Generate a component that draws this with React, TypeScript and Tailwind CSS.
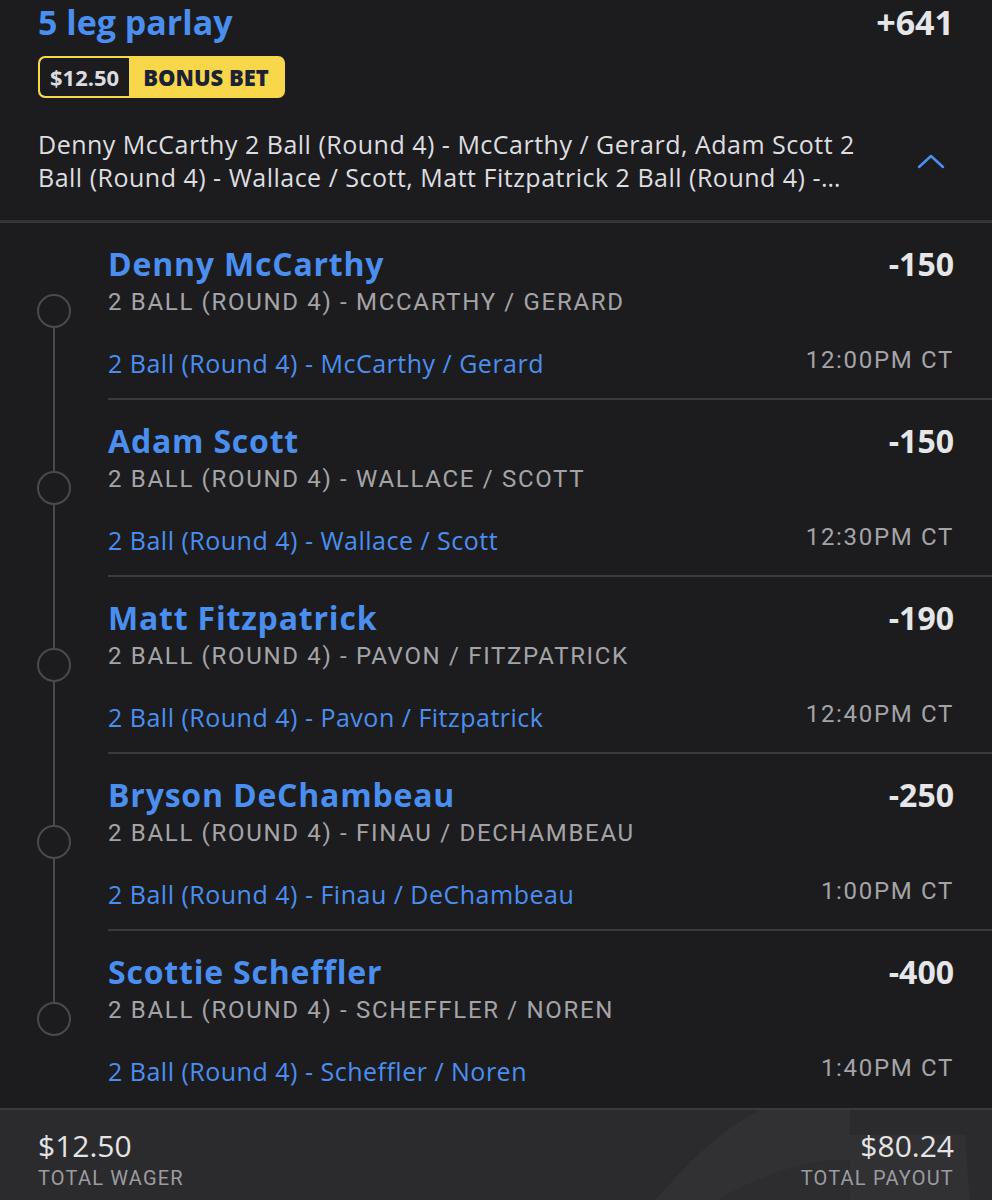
import React from 'react';

type Leg = {
  player: string;
  odds: string;
  market: string;
  selection: string;
  time: string;
};

const legs: Leg[] = [
  { player: 'Denny McCarthy', odds: '-150', market: '2 Ball (Round 4) - McCarthy / Gerard', selection: '2 Ball (Round 4) - McCarthy / Gerard', time: '12:00PM CT' },
  { player: 'Adam Scott', odds: '-150', market: '2 Ball (Round 4) - Wallace / Scott', selection: '2 Ball (Round 4) - Wallace / Scott', time: '12:30PM CT' },
  { player: 'Matt Fitzpatrick', odds: '-190', market: '2 Ball (Round 4) - Pavon / Fitzpatrick', selection: '2 Ball (Round 4) - Pavon / Fitzpatrick', time: '12:40PM CT' },
  { player: 'Bryson DeChambeau', odds: '-250', market: '2 Ball (Round 4) - Finau / DeChambeau', selection: '2 Ball (Round 4) - Finau / DeChambeau', time: '1:00PM CT' },
  { player: 'Scottie Scheffler', odds: '-400', market: '2 Ball (Round 4) - Scheffler / Noren', selection: '2 Ball (Round 4) - Scheffler / Noren', time: '1:40PM CT' },
];

const sans = "font-['Open_Sans','Lato',sans-serif]";
const narrow = "font-['Roboto','Liberation_Sans',sans-serif]";

const LegRow = ({ leg, index, total }: { leg: Leg; index: number; total: number }) => {
  const first = index === 0;
  const last = index === total - 1;

  return (
    <div className="flex h-[177px]">
      {/* timeline */}
      <div className="relative w-[108px] shrink-0">
        <div
          className={`absolute left-[53px] w-[2px] bg-[#4a4a4c] ${first ? 'top-[105px]' : 'top-0'} ${last ? 'h-[71px]' : 'bottom-0'}`}
        />
        <div className="absolute left-[37px] top-[71px] w-[34px] h-[34px] rounded-full border-2 border-[#4a4a4c] bg-[#1c1c1e]" />
      </div>

      <div className={`flex-1 flex flex-col pr-[38px] ${last ? '' : 'border-b-2 border-[#3a3a3c]'}`}>
        <div className="flex items-center justify-between pt-[22px]">
          <span className={`${sans} text-[32px] leading-[38px] font-bold tracking-[0.025em] text-[#4a8ff0]`}>{leg.player}</span>
          <span className={`${sans} text-[32px] leading-[38px] font-bold text-[#e6e6e8]`}>{leg.odds}</span>
        </div>
        <div className={`${narrow} mt-[4px] text-[24px] leading-[30px] tracking-[0.07em] uppercase text-[#a4a4a8]`}>
          {leg.market}
        </div>
        <div className="flex items-center justify-between mt-[30px]">
          <span className={`${sans} text-[25px] leading-[32px] tracking-[0.02em] text-[#4a8ff0]`}>{leg.selection}</span>
          <span className={`${narrow} -mt-[6px] text-[24px] leading-[30px] tracking-[0.07em] text-[#a4a4a8]`}>{leg.time}</span>
        </div>
      </div>
    </div>
  );
};

export default function App() {
  return (
    <div className="w-[992px] h-[1200px] bg-[#1c1c1e] flex flex-col overflow-hidden">
      {/* header */}
      <div className="px-[38px] pt-[2px] pb-[26px] border-b-[3px] border-[#333335]">
        <div className="flex items-center justify-between">
          <span className={`${sans} text-[34px] leading-[40px] font-bold text-[#4a8ff0]`}>5 leg parlay</span>
          <span className={`${sans} text-[34px] leading-[40px] font-bold text-[#e6e6e8]`}>+641</span>
        </div>

        <div className="mt-[14px] flex">
          <div className="flex h-[42px] rounded-[7px] border-2 border-[#f8d84a] bg-[#f8d84a] overflow-hidden">
            <span className={`${sans} flex items-center px-[10px] bg-[#1c1c1e] rounded-l-[5px] text-[22px] font-bold text-[#dcdce0]`}>
              $12.50
            </span>
            <span className={`${sans} flex items-center px-[14px] text-[22px] font-extrabold text-[#1b2235]`}>
              BONUS BET
            </span>
          </div>
        </div>

        <div className="mt-[30px] flex items-center justify-between">
          <p className={`${sans} w-[862px] text-[25px] leading-[33px] tracking-[0.02em] text-[#dedee0] line-clamp-2`}>
            Denny McCarthy 2 Ball (Round 4) - McCarthy / Gerard, Adam Scott 2 Ball (Round 4) - Wallace / Scott, Matt Fitzpatrick 2 Ball (Round 4) - Pavon / Fitzpatrick, Bryson DeChambeau 2 Ball (Round 4) - Finau / DeChambeau, Scottie Scheffler 2 Ball (Round 4) - Scheffler / Noren
          </p>
          <svg width="30" height="18" viewBox="0 0 30 18" fill="none" className="mr-[8px]">
            <path d="M3 15 L15 4 L27 15" stroke="#4a8ff0" strokeWidth="2.5" strokeLinecap="round" strokeLinejoin="round" />
          </svg>
        </div>
      </div>

      {/* legs */}
      <div className="flex flex-col">
        {legs.map((leg, i) => (
          <LegRow key={leg.player} leg={leg} index={i} total={legs.length} />
        ))}
      </div>

      {/* footer */}
      <div className="relative mt-auto h-[94px] bg-[#2b2b2d] border-t-2 border-[#3a3a3c] overflow-hidden">
        <svg className="absolute left-[640px] top-0" width="352" height="94" viewBox="0 0 352 94" fill="none">
          <path d="M12 94 C45 55 80 20 120 0 L210 0 L210 25 L325 25 L330 94 Z" fill="#313133" />
          <path d="M70 94 C110 70 150 55 190 50 L210 50 L210 94 Z" fill="#2d2d2f" />
        </svg>
        <div className="relative flex items-start justify-between px-[38px] pt-[17px]">
          <div className="flex flex-col">
            <span className={`${sans} text-[30px] leading-[38px] text-[#e4e4e6]`}>$12.50</span>
            <span className={`${narrow} text-[20px] leading-[26px] tracking-[0.06em] text-[#9c9ca0]`}>TOTAL WAGER</span>
          </div>
          <div className="flex flex-col items-end">
            <span className={`${sans} text-[30px] leading-[38px] text-[#e4e4e6]`}>$80.24</span>
            <span className={`${narrow} text-[20px] leading-[26px] tracking-[0.06em] text-[#9c9ca0]`}>TOTAL PAYOUT</span>
          </div>
        </div>
      </div>
    </div>
  );
}
